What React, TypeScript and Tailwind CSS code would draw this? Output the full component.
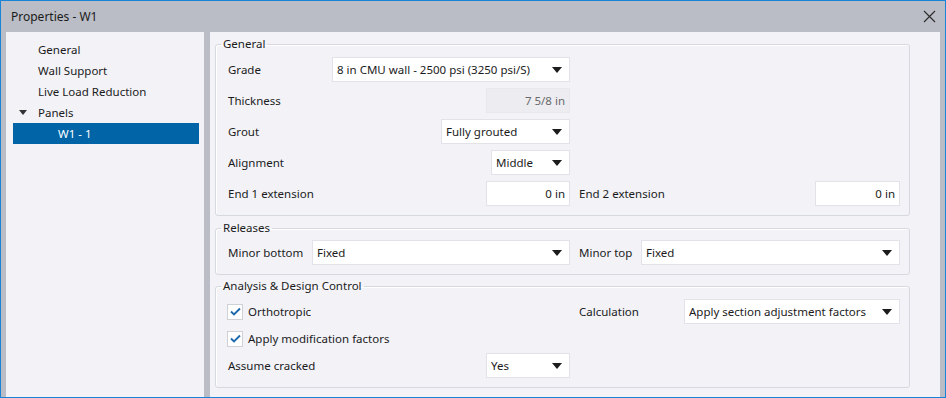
import React from "react";

function Arrow() {
  return (
    <svg width="10" height="6" viewBox="0 0 10 6" className="shrink-0">
      <path d="M0 0H10L5 6Z" fill="#1c1c1c" />
    </svg>
  );
}

function Select({ className, value }: { className: string; value: string }) {
  return (
    <div
      className={`flex h-[25px] items-center justify-between border border-[#e2e3e8] bg-white pl-[4px] pr-[7px] ${className}`}
    >
      <span className="truncate">{value}</span>
      <Arrow />
    </div>
  );
}

function Input({ className, value, readOnly }: { className: string; value: string; readOnly?: boolean }) {
  return (
    <div
      className={`flex h-[25px] items-center justify-end border pr-[4px] ${
        readOnly ? "border-[#e8e8ed] bg-[#ececf1] text-[#6a6a6a]" : "border-[#e2e3e8] bg-white"
      } ${className}`}
    >
      {value}
    </div>
  );
}

function Check() {
  return (
    <div className="flex h-[16px] w-[16px] items-center justify-center border border-[#cfd1d6] bg-white">
      <svg width="11" height="9" viewBox="0 0 11 9">
        <path d="M1 4.5L4 7.5L10 1.5" fill="none" stroke="#1c69ad" strokeWidth="1.9" />
      </svg>
    </div>
  );
}

function Group({ title, children, className }: { title: string; children: React.ReactNode; className: string }) {
  return (
    <fieldset
      className={`w-[695px] rounded-[3px] border border-[#d6d9df] shadow-[inset_1px_1px_0_#ffffff] ${className}`}
    >
      <legend className="ml-[5px] px-[2px] leading-[16px]">{title}</legend>
      {children}
    </fieldset>
  );
}

export default function App() {
  return (
    <div className="flex h-[398px] w-[946px] flex-col border border-[#1883d7] bg-[#babdc5] font-['Noto_Sans',sans-serif] text-[11.5px] text-[#1b1b1b]">
      {/* title bar */}
      <div className="flex h-[31px] shrink-0 items-center justify-between pl-[10px] pr-[9px]">
        <span className="text-[12px]">Properties - W1</span>
        <svg width="13" height="13" viewBox="0 0 13 13">
          <path d="M1 1L12 12M12 1L1 12" stroke="#2a2a2a" strokeWidth="1.1" />
        </svg>
      </div>
      {/* body */}
      <div className="flex min-h-0 flex-1 pl-[5px] pr-[5px]">
        {/* tree */}
        <div className="flex w-[198px] flex-col bg-[#f2f2f7] pl-[7px] pt-[7px]">
          <div className="flex h-[21px] items-center pl-[25px]">General</div>
          <div className="flex h-[21px] items-center pl-[25px]">Wall Support</div>
          <div className="flex h-[21px] items-center pl-[25px]">Live Load Reduction</div>
          <div className="flex h-[21px] items-center">
            <svg width="8" height="5" viewBox="0 0 8 5" className="ml-[6px] mr-[11px]">
              <path d="M0 0H8L4 5Z" fill="#333333" />
            </svg>
            Panels
          </div>
          <div className="flex h-[21px] w-[186px] items-center bg-[#0064a7] pl-[45px] text-white">W1 - 1</div>
        </div>
        {/* splitter */}
        <div className="w-[6px] shrink-0" />
        {/* content */}
        <div className="flex flex-1 flex-col bg-[#f2f2f7] pl-[5px] pt-[4px]">
          <Group title="General" className="">
            <div className="flex flex-col gap-[6px] pb-[9px] pl-[12px] pr-[9px] pt-[5px]">
              <div className="flex w-[342px] items-center justify-between">
                <span>Grade</span>
                <Select className="w-[238px]" value="8 in CMU wall - 2500 psi (3250 psi/S)" />
              </div>
              <div className="flex w-[342px] items-center justify-between">
                <span>Thickness</span>
                <Input className="w-[84px]" value="7 5/8 in" readOnly />
              </div>
              <div className="flex w-[342px] items-center justify-between">
                <span>Grout</span>
                <Select className="w-[129px]" value="Fully grouted" />
              </div>
              <div className="flex w-[342px] items-center justify-between">
                <span>Alignment</span>
                <Select className="w-[79px]" value="Middle" />
              </div>
              <div className="flex gap-[9px]">
                <div className="flex w-[342px] items-center justify-between">
                  <span>End 1 extension</span>
                  <Input className="w-[84px]" value="0 in" />
                </div>
                <div className="flex w-[321px] items-center justify-between">
                  <span>End 2 extension</span>
                  <Input className="w-[85px]" value="0 in" />
                </div>
              </div>
            </div>
          </Group>
          <Group title="Releases" className="mt-[4px]">
            <div className="flex gap-[9px] pb-[9px] pl-[12px] pr-[9px] pt-[4px]">
              <div className="flex w-[342px] items-center justify-between">
                <span>Minor bottom</span>
                <Select className="w-[258px]" value="Fixed" />
              </div>
              <div className="flex w-[321px] items-center justify-between">
                <span>Minor top</span>
                <Select className="w-[259px]" value="Fixed" />
              </div>
            </div>
          </Group>
          <Group title="Analysis & Design Control" className="mt-[3px]">
            <div className="flex flex-col pb-[9px] pl-[11px] pr-[9px] pt-[5px]">
              <div className="flex h-[25px] gap-[10px]">
                <div className="flex w-[342px] items-center gap-[5px]">
                  <Check />
                  <span>Orthotropic</span>
                </div>
                <div className="flex w-[321px] items-center justify-between">
                  <span>Calculation</span>
                  <Select className="w-[216px]" value="Apply section adjustment factors" />
                </div>
              </div>
              <div className="flex h-[29px] items-center gap-[5px]">
                <Check />
                <span>Apply modification factors</span>
              </div>
              <div className="flex h-[25px] w-[343px] items-center justify-between pl-[1px]">
                <span>Assume cracked</span>
                <Select className="w-[84px]" value="Yes" />
              </div>
            </div>
          </Group>
        </div>
      </div>
    </div>
  );
}
